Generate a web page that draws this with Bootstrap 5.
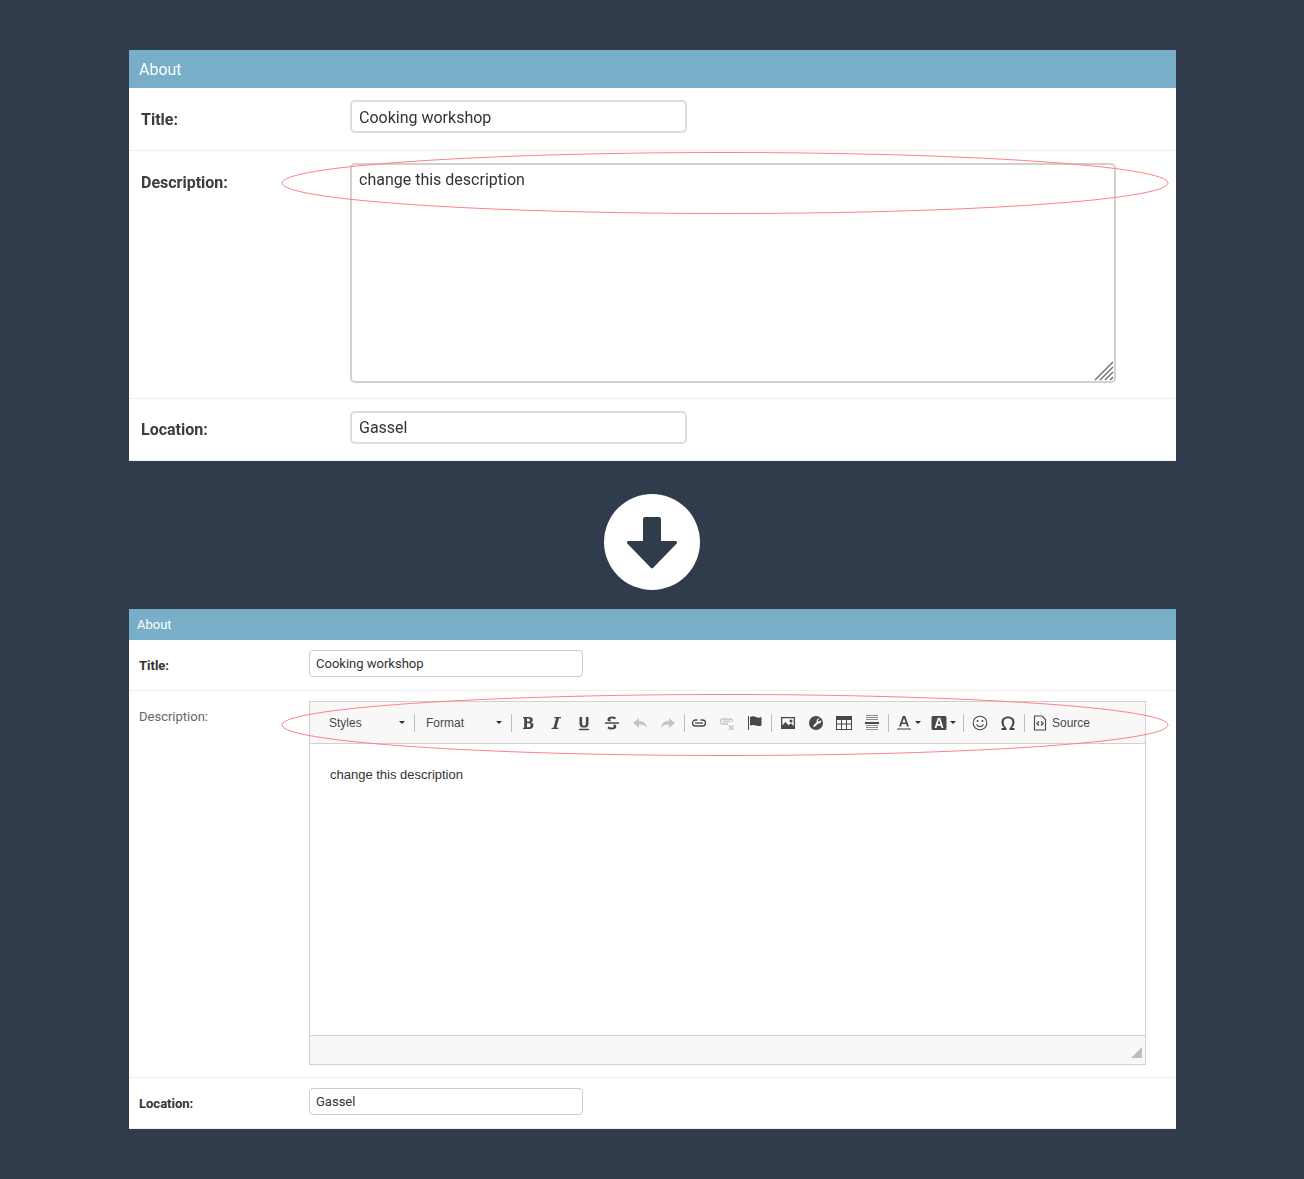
<!DOCTYPE html>
<html lang="en">
<head>
  <meta charset="UTF-8">
  <title>About form</title>
  <link href="https://cdn.jsdelivr.net/npm/bootstrap@5.3.0/dist/css/bootstrap.min.css" rel="stylesheet">
  <style>
    body { background-color: #303c4b; font-family: Roboto, "Liberation Sans", sans-serif; }
    .page-wrap { width: 1047px; margin-left: 129px; padding: 50px 0; }
    .form-panel { position: relative; background: #fff; }
    .panel-head { background: #79aec8; color: #fff; }
    .form-line { display: flex; border-bottom: 1px solid #eee; }
    .form-line:last-child { border-bottom: 0; }

    /* upper, enlarged screenshot */
    .big-panel { height: 411px; filter: blur(.5px); }
    .big-panel .panel-head { height: 38px; line-height: 39px; padding-left: 10px; font-size: 16px; }
    .big-panel .form-line { padding: 12px 0 0 12px; }
    .big-panel .line-title { height: 63px; }
    .big-panel .line-desc { height: 248px; }
    .big-panel .line-loc { height: 62px; }
    .big-panel .field-label { width: 209px; font-weight: 700; font-size: 16px; color: #3c3c3c; padding-top: 8px; }
    .big-panel .line-loc .field-label { padding-top: 7px; }
    .big-field { width: 337px; height: 33px; border: 2px solid #ddd; border-radius: 5px; padding: 0 7px; font-size: 16px; line-height: 30px; color: #333; }
    .line-title .big-field { line-height: 31px; }
    .big-area { position: relative; width: 766px; height: 220px; border: 2px solid #d0d0d0; border-radius: 5px; padding: 3px 7px; font-size: 16px; line-height: 24px; color: #333; }
    .big-grip { position: absolute; right: 0; bottom: 0; }

    .arrow-wrap { display: flex; justify-content: center; padding: 33px 1px 19px 0; }
    .arrow-disc { width: 96px; height: 96px; }

    /* lower, real size */
    .small-panel { height: 520px; }
    .small-panel .panel-head { height: 31px; line-height: 31px; padding-left: 8px; font-size: 13px; }
    .small-panel .form-line { padding: 10px 0 0 10px; }
    .small-panel .line-title { height: 51px; }
    .small-panel .line-desc { height: 387px; }
    .small-panel .line-loc { height: 51px; }
    .small-panel .field-label { width: 170px; font-size: 13px; font-weight: 700; color: #333; padding-top: 6px; }
    .small-panel .line-desc .field-label { font-weight: 400; color: #666; }
    .small-field { width: 274px; height: 27px; border: 1px solid #ccc; border-radius: 4px; padding: 0 6px; font-size: 13px; line-height: 25px; color: #333; }

    .ck-box { width: 837px; height: 364px; border: 1px solid #d1d1d1; display: flex; flex-direction: column; font-family: "Liberation Sans", Arial, sans-serif; }
    .ck-tools { height: 42px; background: #f8f8f8; border-bottom: 1px solid #d1d1d1; display: flex; align-items: center; color: #484848; font-size: 12px; flex: none; }
    .ck-combo { display: flex; align-items: center; justify-content: space-between; width: 79px; padding-right: 3px; }
    .ck-combo-a { margin-left: 19px; }
    .ck-combo-b { margin-left: 9px; }
    .ck-sep { width: 1px; height: 18px; background: #bcbcbc; margin-left: 2px; margin-right: 2px; flex: none; }
    .ck-sep-wide { margin-left: 6px; }
    .ck-sep-tight { margin-right: 0; }
    .ck-btn { width: 28px; height: 26px; display: flex; align-items: center; justify-content: center; flex: none; }
    .ck-btn-wide { width: 35px; gap: 3px; }
    .ck-caret { width: 0; height: 0; border-left: 3px solid transparent; border-right: 3px solid transparent; border-top: 3px solid #2f2f2f; }
    .ck-src { display: flex; align-items: center; gap: 5px; margin-left: 6px; }
    .ck-body { flex: 1; padding: 22px 20px; font-size: 13px; line-height: 18px; color: #333; }
    .ck-foot { height: 29px; background: #f8f8f8; border-top: 1px solid #d1d1d1; flex: none; position: relative; }
    .ck-grip { position: absolute; right: 3px; bottom: 6px; }

    .oval-mark { position: absolute; left: 152px; width: 888px; height: 62px; pointer-events: none; }
    .oval-top { top: 101.5px; }
    .oval-low { top: 84.5px; }
  </style>
</head>
<body>

<div class="page-wrap">

  <div class="form-panel big-panel">
    <div class="panel-head">About</div>
    <div class="form-line line-title">
      <div class="field-label">Title:</div>
      <div class="big-field">Cooking workshop</div>
    </div>
    <div class="form-line line-desc">
      <div class="field-label">Description:</div>
      <div class="big-area">change this description
        <svg class="big-grip" width="20" height="20" viewBox="0 0 20 20"><path d="M1 19 19 1M6 19 19 6M11 19 19 11M16 19 19 16" stroke="#777" stroke-width="1.600" fill="none"/></svg>
      </div>
    </div>
    <div class="form-line line-loc">
      <div class="field-label">Location:</div>
      <div class="big-field">Gassel</div>
    </div>
    <svg class="oval-mark oval-top" viewBox="0 0 888 62"><ellipse cx="444" cy="31" rx="443" ry="30.500" fill="none" stroke="#ff8086" stroke-width="1"/></svg>
  </div>

  <div class="arrow-wrap">
    <svg class="arrow-disc" viewBox="0 0 96 96">
      <circle cx="48" cy="48" r="48" fill="#fff"/>
      <path d="M39 25a2 2 0 0 1 2-2h14a2 2 0 0 1 2 2v22h14.500a1.500 1.500 0 0 1 1.200 2.500L49.500 73.500a2 2 0 0 1-3 0L23.300 49.500A1.500 1.500 0 0 1 24.500 47H39z" fill="#303c4b"/>
    </svg>
  </div>

  <div class="form-panel small-panel">
    <div class="panel-head">About</div>
    <div class="form-line line-title">
      <div class="field-label">Title:</div>
      <div class="small-field">Cooking workshop</div>
    </div>
    <div class="form-line line-desc">
      <div class="field-label">Description:</div>
      <div class="ck-box">
        <div class="ck-tools">
          <div class="ck-combo ck-combo-a"><span>Styles</span><i class="ck-caret"></i></div>
          <div class="ck-sep ck-sep-wide"></div>
          <div class="ck-combo ck-combo-b"><span>Format</span><i class="ck-caret"></i></div>
          <div class="ck-sep ck-sep-wide"></div>
          <div class="ck-btn"><svg width="16" height="16" viewBox="0 0 16 16"><path fill-rule="evenodd" fill="#484848" d="M3 2h6.200c2.300 0 3.600 1 3.600 2.900 0 1.200-.7 2.100-1.800 2.500 1.500.4 2.400 1.400 2.400 2.900 0 2.200-1.600 3.700-4.100 3.700H3v-1.300h1.200V3.300H3zm4 1.600v3h1.500c1 0 1.500-.5 1.500-1.500s-.5-1.500-1.500-1.500zm0 4.600v4h1.800c1.200 0 1.800-.8 1.800-2s-.6-2-1.800-2z"/></svg></div>
          <div class="ck-btn"><svg width="16" height="16" viewBox="0 0 16 16"><path fill="#484848" d="M6.500 2H13v1.300h-2L8.400 12.700h2V14H3.500v-1.300h2l2.600-9.400h-2z"/></svg></div>
          <div class="ck-btn"><svg width="16" height="16" viewBox="0 0 16 16"><path fill="#484848" d="M3.500 2h2.600v6.300c0 1.700.6 2.500 1.900 2.500s1.900-.8 1.900-2.500V2h2.600v6.400c0 2.800-1.600 4.200-4.500 4.200S3.500 11.200 3.500 8.400zM3 13.800h10v1.400H3z"/></svg></div>
          <div class="ck-btn"><svg width="16" height="16" viewBox="0 0 16 16"><path fill="#484848" d="M1 7.200h14v1.600H1zM4 6.300c-.3-.5-.5-1.100-.5-1.700 0-2 1.800-3.100 4.500-3.100 1.500 0 2.800.3 3.900.9l-.6 1.900c-1-.5-2.100-.8-3.200-.8-1.200 0-1.900.4-1.900 1.100 0 .7.500 1.200 1.400 1.700zM12 9.800c.2.400.3.900.3 1.400 0 2.200-1.800 3.300-4.500 3.300-1.600 0-3.100-.4-4.200-1l.6-1.900c1.100.6 2.300 1 3.500 1 1.300 0 2.100-.5 2.100-1.300 0-.6-.3-1.100-1-1.500z"/></svg></div>
          <div class="ck-btn"><svg width="16" height="16" viewBox="0 0 16 16"><path fill="#c4c4c4" d="M7 3v3c4.500 0 7.500 2.500 8 7-1.500-2.500-4-3.500-8-3.500V13L1 8z"/></svg></div>
          <div class="ck-btn"><svg width="16" height="16" viewBox="0 0 16 16"><path fill="#c4c4c4" d="M9 3v3C4.500 6 1.500 8.500 1 13c1.500-2.500 4-3.500 8-3.500V13l6-5z"/></svg></div>
          <div class="ck-sep ck-sep-tight"></div>
          <div class="ck-btn"><svg width="16" height="16" viewBox="0 0 16 16"><path fill="none" stroke="#484848" stroke-width="1.300" d="M6.500 5H4.500a3 3 0 0 0 0 6h7a3 3 0 0 0 0-6h-2"/><path fill="none" stroke="#484848" stroke-width="1.300" d="M4 8h8"/></svg></div>
          <div class="ck-btn"><svg width="16" height="16" viewBox="0 0 16 16"><path fill="none" stroke="#c4c4c4" stroke-width="1.300" d="M9 9H4a2.500 2.500 0 0 1 0-5h7a2.500 2.500 0 0 1 2.500 2.500M4 6.500h7"/><path fill="none" stroke="#c4c4c4" stroke-width="1.500" d="M10 10.500l4.500 4.500M14.500 10.500 10 15"/></svg></div>
          <div class="ck-btn"><svg width="16" height="16" viewBox="0 0 16 16"><path fill="#484848" d="M1 1h1v14H1zM3 2c2-1 4-1 6 0s3.500.7 5.500 0v8.500c-2 .8-3.500.8-5.500 0s-4-.8-6 0z"/></svg></div>
          <div class="ck-sep"></div>
          <div class="ck-btn"><svg width="16" height="16" viewBox="0 0 16 16"><path fill-rule="evenodd" fill="#484848" d="M1 2h14v12H1zm1.300 1.300v7L5.500 7l3 3.300 2.500-2 2.700 3V3.300zM11 4.500a1.500 1.500 0 1 1 0 3 1.500 1.500 0 0 1 0-3z"/></svg></div>
          <div class="ck-btn"><svg width="16" height="16" viewBox="0 0 16 16"><path fill-rule="evenodd" fill="#484848" d="M8 1a7 7 0 1 1 0 14A7 7 0 0 1 8 1zm4 2.500c-1.500-.2-2.700.2-3.200 1.300-.4.800-.3 1.500 0 2L5 11l1.200 1.200 4.200-3.800c.7.300 1.500.1 2-.4.800-.8.900-1.900.5-2.900l-1.500 1.500-1.300-.4-.3-1.300z"/></svg></div>
          <div class="ck-btn"><svg width="16" height="16" viewBox="0 0 16 16"><path fill-rule="evenodd" fill="#484848" d="M0 1h16v14H0zm1 4v3.500h4V5zm5 0v3.500h4V5zm5 0v3.500h4V5zM1 9.500V14h4V9.500zm5 0V14h4V9.500zm5 0V14h4V9.500z"/></svg></div>
          <div class="ck-btn"><svg width="16" height="16" viewBox="0 0 16 16"><path fill="#484848" d="M1 7h14v2H1z"/><path stroke="#8a8a8a" d="M2 .5h12M2 2.500h12M2 4.500h12M2 10.500h12M2 12.500h12M2 14.500h12"/></svg></div>
          <div class="ck-sep"></div>
          <div class="ck-btn ck-btn-wide"><svg width="16" height="16" viewBox="0 0 16 16"><path fill="#484848" d="M6.800 1h2.400L13 11.500h-2l-.8-2.500H5.800L5 11.500H3zm1.200 2.200L6.300 7.600h3.400z"/><path fill="#999" d="M1 13h14v2H1z"/></svg><i class="ck-caret"></i></div>
          <div class="ck-btn ck-btn-wide"><svg width="16" height="16" viewBox="0 0 16 16"><path fill-rule="evenodd" fill="#484848" d="M2 1h12a1.500 1.500 0 0 1 1.500 1.500v11A1.500 1.500 0 0 1 14 15H2a1.500 1.500 0 0 1-1.500-1.500v-11A1.500 1.500 0 0 1 2 1zm4.800 1.800L3.500 13h2l.7-2.300h3.600l.7 2.300h2L9.200 2.800zM8 4.700l1.300 4.300H6.700z"/></svg><i class="ck-caret"></i></div>
          <div class="ck-sep"></div>
          <div class="ck-btn"><svg width="16" height="16" viewBox="0 0 16 16"><circle cx="8" cy="8" r="6.800" fill="none" stroke="#484848" stroke-width="1.100"/><circle cx="5.600" cy="6" r="1" fill="#484848"/><circle cx="10.400" cy="6" r="1" fill="#484848"/><path d="M4.500 9.500c1 2.800 6 2.800 7 0" fill="none" stroke="#484848" stroke-width="1.100"/></svg></div>
          <div class="ck-btn"><svg width="16" height="16" viewBox="0 0 16 16"><path fill="#484848" d="M1.500 13h2.800c-1.600-1.300-2.800-3.300-2.800-5.800C1.500 3.700 4 1.500 8 1.500s6.500 2.200 6.500 5.700c0 2.500-1.200 4.500-2.800 5.800h2.800v2H9.500v-2c1.700-1 2.800-3.100 2.800-5.700 0-2.500-1.600-4-4.300-4s-4.300 1.500-4.300 4c0 2.600 1.100 4.700 2.800 5.700v2h-5z"/></svg></div>
          <div class="ck-sep"></div>
          <div class="ck-src"><svg width="14" height="16" viewBox="0 0 14 16"><path fill="none" stroke="#484848" stroke-width="1.100" d="M1.500 1H9l3.500 3.500V15h-11z"/><path fill="none" stroke="#484848" stroke-width="1.300" d="M6 6.500 4 8.500l2 2M8 6.500l2 2-2 2"/></svg><span>Source</span></div>
        </div>
        <div class="ck-body">change this description</div>
        <div class="ck-foot">
          <svg class="ck-grip" width="11" height="11" viewBox="0 0 11 11"><path d="M11 0v11H0z" fill="#bdbdbd"/></svg>
        </div>
      </div>
    </div>
    <div class="form-line line-loc">
      <div class="field-label">Location:</div>
      <div class="small-field">Gassel</div>
    </div>
    <svg class="oval-mark oval-low" viewBox="0 0 888 62"><ellipse cx="444" cy="31" rx="443" ry="30.500" fill="none" stroke="#ff8086" stroke-width="1"/></svg>
  </div>

</div>

<script src="https://cdn.jsdelivr.net/npm/bootstrap@5.3.0/dist/js/bootstrap.bundle.min.js"></script>
</body>
</html>
